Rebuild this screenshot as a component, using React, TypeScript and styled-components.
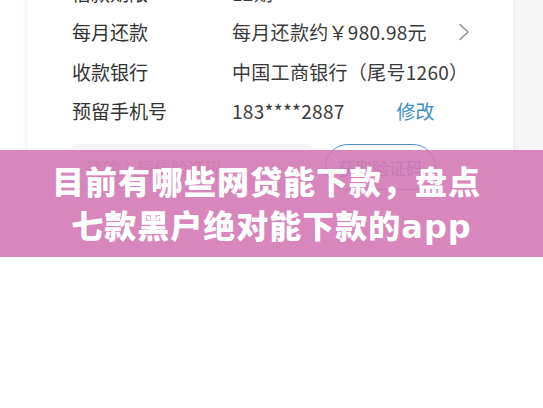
import React from 'react';
import styled, { createGlobalStyle } from 'styled-components';

const GlobalStyle = createGlobalStyle`
  body {
    margin: 0;
    background: #ffffff;
    font-family: "Noto Sans CJK SC", "Noto Sans", sans-serif;
  }
`;

type Row = {
  label: string,
  value: string,
  action?: string,
  arrow?: boolean,
};

const rows: Row[] = [
  { label: '借款期限', value: '12期' },
  { label: '每月还款', value: '每月还款约￥980.98元', arrow: true },
  { label: '收款银行', value: '中国工商银行（尾号1260）' },
  { label: '预留手机号', value: '183****2887', action: '修改' },
];

const Chevron = () => (
  <svg width="14" height="18" viewBox="0 0 14 18" fill="none">
    <path d="M3 1.5 L11 9 L3 16.5" stroke="#8e8e8e" strokeWidth="1.5" strokeLinecap="round" strokeLinejoin="round" />
  </svg>
);

export default function App() {
  return (
    <Page>
      <GlobalStyle />
      <Screen>
        <Card>
          {rows.map((r) => (
            <InfoRow key={r.label}>
              <Label>{r.label}</Label>
              <Value>
                {r.value}
                {r.action && <Action>{r.action}</Action>}
              </Value>
              {r.arrow && <Arrow><Chevron /></Arrow>}
            </InfoRow>
          ))}
          <CodeRow>
            <CodeInput>请输入短信验证码</CodeInput>
            <CodeButton>获取验证码</CodeButton>
          </CodeRow>
        </Card>
      </Screen>
      <Banner>
        <TitleLine $shift={10}>目前有哪些网贷能下款，盘点</TitleLine>
        <TitleLine $shift={0}>七款黑户绝对能下款的<Latin>app</Latin></TitleLine>
      </Banner>
    </Page>
  );
}

const Page = styled.div`
  position: relative;
  width: 543px;
  height: 408px;
  overflow: hidden;
  background: #ffffff;
`;

const Screen = styled.div`
  padding: 0 30px 0 28px;
  background: linear-gradient(to right, #ffffff 0%, #fbfbfb 60%, #f6f6f6 100%);
  overflow: hidden;
`;

const Card = styled.div`
  margin-top: -31px;
  padding: 3.5px 0 29px 44px;
  width: 485px;
  box-sizing: border-box;
  background: #ffffff;
  box-shadow: 0 2px 10px rgba(0, 0, 0, 0.05);
  margin-bottom: 16px;
`;

const InfoRow = styled.div`
  display: grid;
  grid-template-columns: 160px 225px auto;
  align-items: center;
  height: 39.5px;
`;

const Label = styled.div`
  font-size: 19px;
  color: #333333;
`;

const Value = styled.div`
  display: flex;
  align-items: center;
  font-size: 19px;
  color: #3a3a3a;
  white-space: nowrap;
  letter-spacing: 0.3px;
`;

const Action = styled.span`
  margin-left: 52px;
  color: #3b8fc4;
  letter-spacing: 0;
`;

const Arrow = styled.div`
  display: flex;
  align-items: center;
`;

const CodeRow = styled.div`
  display: flex;
  align-items: center;
  margin-top: 13.5px;
  height: 46px;
`;

const CodeInput = styled.div`
  width: 240px;
  height: 46px;
  box-sizing: border-box;
  padding-left: 14px;
  display: flex;
  align-items: center;
  background: #f5f5f7;
  border-radius: 4px;
  font-size: 17px;
  color: #a8a8a8;
`;

const CodeButton = styled.div`
  margin-left: 13px;
  width: 111px;
  height: 46px;
  box-sizing: border-box;
  border: 1.5px solid #4a90d0;
  border-radius: 23px;
  display: flex;
  align-items: center;
  justify-content: center;
  font-size: 17px;
  color: #4a90d0;
`;

const Banner = styled.div`
  position: absolute;
  left: 0;
  right: 0;
  top: 150px;
  height: 107px;
  background: rgba(210, 118, 178, 0.88);
  display: flex;
  flex-direction: column;
  align-items: center;
  justify-content: center;
`;

const TitleLine = styled.div<{ $shift: number }>`
  padding-right: ${(p) => p.$shift}px;
  font-family: "Noto Sans CJK SC", sans-serif;
  font-size: 32px;
  font-weight: 900;
  line-height: 44px;
  color: #ffffff;
  letter-spacing: 1px;
  white-space: nowrap;
`;

const Latin = styled.span`
  font-family: "DejaVu Sans", sans-serif;
  font-weight: 700;
`;
